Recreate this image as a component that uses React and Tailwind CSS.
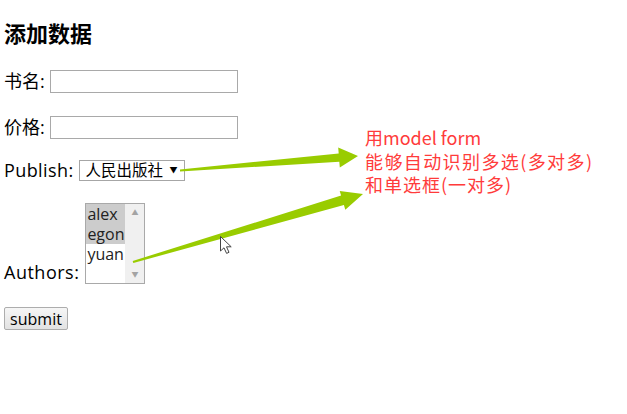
import { useState } from 'react';

const authors = ['alex', 'egon', 'yuan'];

function Arrows() {
    return (
        <svg className="absolute left-0 top-0 pointer-events-none" width="627" height="414" viewBox="0 0 627 414">
            <polygon
                fill="#99cc00"
                points="180,169.6 338.7,153.4 338.2,147.6 358,156 339.8,167.6 339.3,161.8 180,171.4"
            />
            <polygon
                fill="#99cc00"
                points="132.7,261 341.1,195.5 339.7,190.9 363,194 345.3,209.7 343.9,205.1 133.3,263"
            />
            {/* mouse pointer */}
            <path
                d="M220.5 236.5 L220.5 251 L224 247.8 L226.6 253.4 L229 252.3 L226.5 246.8 L231.2 246.8 Z"
                fill="#fff"
                stroke="#444"
                strokeWidth="1"
                strokeLinejoin="round"
            />
        </svg>
    );
}

export default function App() {
    const [selected, setSelected] = useState(['alex', 'egon']);

    function toggle(name) {
        setSelected(s => (s.includes(name) ? s.filter(n => n !== name) : [...s, name]));
    }

    return (
        <div className="relative w-[627px] h-[414px] bg-white overflow-hidden text-black font-['Open_Sans','Noto_Sans_CJK_SC',sans-serif]">
            <form className="flex flex-col items-start pl-[4px] pt-[19px]" onSubmit={e => e.preventDefault()}>
                <h3 className="text-[22px] leading-[28px] font-bold">添加数据</h3>

                <div className="flex items-center h-[23px] mt-[23px] text-[18px]">
                    <label>书名:</label>
                    <input type="text" className="ml-[5px] w-[188px] h-[23px] border border-[#a9a9a9] bg-white outline-none px-1 text-[16px]" />
                </div>

                <div className="flex items-center h-[23px] mt-[23px] text-[18px]">
                    <label>价格:</label>
                    <input type="text" className="ml-[5px] w-[188px] h-[23px] border border-[#a9a9a9] bg-white outline-none px-1 text-[16px]" />
                </div>

                <div className="flex items-center h-[21px] mt-[21px] text-[18px]">
                    <label className="tracking-[0.4px]">Publish:</label>
                    <div className="relative ml-[5px] w-[106px] h-[21px] border border-[#a6a6a6] bg-white flex items-center pl-[6px] text-[15.5px] leading-none">
                        <span>人民出版社</span>
                        <span className="absolute right-[6px] top-[5px] text-[8px] leading-none">▼</span>
                    </div>
                </div>

                <div className="flex items-end mt-[22px] text-[18px]">
                    <label className="leading-[22px] mb-[1px] tracking-[0.5px]">Authors:</label>
                    <div className="ml-[6px] w-[60px] h-[81px] border border-[#a9a9a9] bg-white flex">
                        <div className="w-[39px] flex flex-col text-[16px] leading-[20px] text-[#222]">
                            {authors.map(a => (
                                <div
                                    key={a}
                                    onClick={() => toggle(a)}
                                    className={`h-[20px] pl-[1px] ${selected.includes(a) ? 'bg-[#cccccc]' : 'bg-white'}`}
                                >
                                    {a}
                                </div>
                            ))}
                        </div>
                        <div className="w-[19px] bg-[#f0f0f0] flex flex-col items-center justify-between py-[5px] text-[7px] leading-none text-[#a3a3a3]">
                            <span>▲</span>
                            <span>▼</span>
                        </div>
                    </div>
                </div>

                <button
                    type="submit"
                    className="mt-[23px] w-[64px] h-[23px] border border-[#adadad] rounded-[2px] bg-gradient-to-b from-[#f6f6f6] to-[#e2e2e2] text-[16px] leading-none"
                >
                    submit
                </button>
            </form>

            <Arrows />

            {/* annotation */}
            <div className="absolute left-[365px] top-[126px] text-[18px] leading-[23.5px] text-[#ff3b3b] font-['Noto_Sans_CJK_SC',sans-serif]">
                <div>用model form</div>
                <div className="tracking-[1.4px]">能够自动识别多选(多对多)</div>
                <div className="tracking-[1px]">和单选框(一对多)</div>
            </div>
        </div>
    );
}
